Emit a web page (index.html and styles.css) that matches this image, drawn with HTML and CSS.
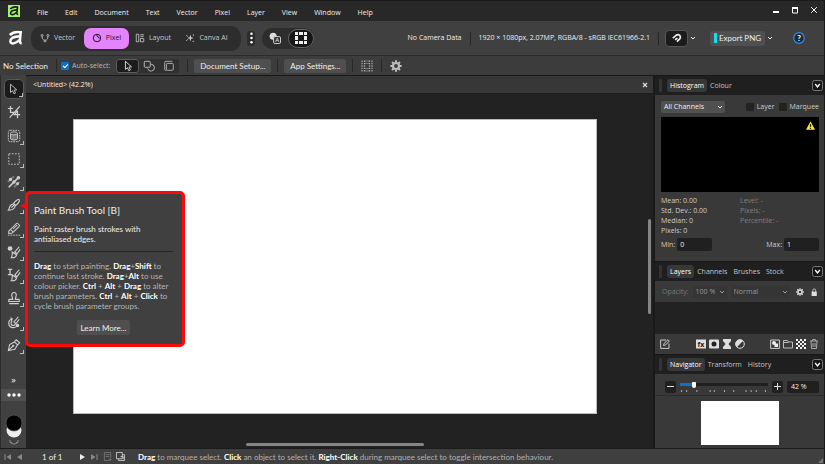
FILE: index.html
```html
<!DOCTYPE html>
<html lang="en">
<head>
<meta charset="utf-8">
<meta name="viewport" content="width=device-width, initial-scale=1">
<title>Untitled</title>
<link rel="stylesheet" href="styles.css">
</head>
<body>
<svg class="defs" aria-hidden="true">
  <symbol id="chevron" viewBox="0 0 6 6"><path d="M1 2l2 2 2-2" fill="none" stroke="currentColor"/></symbol>
  <symbol id="collapse" viewBox="0 0 11 11"><rect x=".5" y=".5" width="10" height="10" rx="2" fill="#161616" stroke="#777"/><path d="M3.200 4l2.300 3 2.300-3" fill="none" stroke="#fff" stroke-width="1.300"/></symbol>
  <symbol id="gear" viewBox="0 0 12 12"><circle cx="6" cy="6" r="3" fill="none" stroke="currentColor" stroke-width="2.200"/><path d="M6 .3v2M6 9.700v2M.3 6h2M9.700 6h2M2 2l1.400 1.400M8.600 8.600L10 10M10 2L8.600 3.400M3.400 8.600L2 10" stroke="currentColor" stroke-width="2"/></symbol>
  <symbol id="pointer" viewBox="0 0 14 14"><path d="M4 1.500v9.500l2.300-2 1.700 3.500 1.800-.9-1.700-3.300 3-.3z" fill="none" stroke="currentColor" stroke-linejoin="round"/></symbol>
  <symbol id="mark" viewBox="0 0 16 16"><path d="M2 4.800C4.500 2.200 9 1.200 13.500 1.800L12.600 11q0 2.500 2 2.400" fill="none" stroke="currentColor" stroke-width="2.800"/><path d="M12.500 6.200C7 6.500 2.500 8.500 2.500 11.500c0 3.500 6 3 9.500-1.500" fill="none" stroke="currentColor" stroke-width="2.600"/></symbol>
  <symbol id="brush" viewBox="0 0 16 16"><path d="M14 2c-1.800-1.200-5 2-6.500 4.300l2.200 2.200C12 7 15.200 3.500 14 2zM7.300 6.500L4.500 8C2.500 9.500 3 12 1.500 14c3 0 5.500-.5 6.800-2.500l1.400-2.800M5 11l3.500-3.500" fill="none" stroke="currentColor" stroke-width="1.300"/></symbol>
</svg>

<header class="menubar">
  <svg class="applogo" viewBox="0 0 12 12"><rect width="12" height="12" fill="#a4f074"/><use href="#mark" x="1" y="1" width="10" height="10"/></svg>
  <nav class="menus">
    <a href="#">File</a><a href="#">Edit</a><a href="#">Document</a><a href="#">Text</a><a href="#">Vector</a><a href="#">Pixel</a><a href="#">Layer</a><a href="#">View</a><a href="#">Window</a><a href="#">Help</a>
  </nav>
  <div class="winbtns">
    <button aria-label="Minimise"><svg viewBox="0 0 8 8"><path d="M1 6h6" stroke="#fff" stroke-width="2"/></svg></button>
    <button aria-label="Maximise"><svg viewBox="0 0 8 8"><path d="M1.500 2v5h5V2" fill="none" stroke="#fff"/><path d="M1 2h6" stroke="#fff" stroke-width="2"/></svg></button>
    <button aria-label="Close"><svg viewBox="0 0 8 8"><path d="M1.200 1.200l5.600 5.600M6.800 1.200L1.200 6.800" stroke="#fff"/></svg></button>
  </div>
</header>

<div class="toolbar">
  <svg class="biglogo" viewBox="0 0 16 16"><use href="#mark"/></svg>
  <div class="modes">
    <button class="mode"><svg viewBox="0 0 12 12"><g fill="none" stroke="currentColor"><circle cx="2.500" cy="3" r="1.200"/><circle cx="9.500" cy="3" r="1.200"/><circle cx="6" cy="9.500" r="1.200"/><path d="M2.500 4.500c0 2.500 1 3.500 2.500 4M9.500 4.500c0 2.500-1 3.500-2.500 4"/></g></svg>Vector</button>
    <button class="mode on"><svg viewBox="0 0 12 12"><circle cx="6" cy="6" r="4.500" fill="none" stroke="currentColor" stroke-width="1.200"/><path d="M6 1.500V4a2 2 0 0 1 2 2h2.500" fill="none" stroke="currentColor"/></svg>Pixel</button>
    <button class="mode layout"><svg viewBox="0 0 12 12"><path d="M1.500 1.500h3v9h-3zM6.500 2h4M6.500 4h4M6.500 6.500h4v4h-4z" fill="none" stroke="currentColor"/></svg>Layout</button>
    <button class="mode canva"><svg viewBox="0 0 12 12"><path d="M6.500 2l1 3 3 1-3 1-1 3-1-3-3-1 3-1z" fill="currentColor"/><path d="M1.500 2.500l2 2M1.500 9.500l2-2M10 1.500v2M9 10h2" stroke="currentColor"/></svg>Canva AI</button>
  </div>
  <button class="dots" aria-label="More"><svg viewBox="0 0 6 14"><g fill="#fff"><circle cx="3" cy="2" r="1.500"/><circle cx="3" cy="7" r="1.500"/><circle cx="3" cy="12" r="1.500"/></g></svg></button>
  <div class="views">
    <button aria-label="Assistant"><svg viewBox="0 0 13 13"><circle cx="4.500" cy="4.500" r="3.800" fill="#ddd"/><rect x="5" y="5" width="7.500" height="7.500" rx="1.500" fill="#2d2d2d" stroke="#ddd"/><text x="8.750" y="11" font-size="6" font-weight="700" text-anchor="middle" fill="#ddd">A</text></svg></button>
    <button class="on" aria-label="Pixel grid"><svg viewBox="0 0 12 12"><path d="M0 0h3v3H0zM4 0h4v3H4zM9 0h3v3H9zM0 4h3v4H0zM9 4h3v4H9zM0 9h3v3H0zM4 9h4v3H4zM9 9h3v3H9z" fill="#eee"/></svg></button>
  </div>
  <div class="info"><span>No Camera Data</span><i class="sep"></i><span>1920 × 1080px, 2.07MP, RGBA/8 - sRGB IEC61966-2.1</span><i class="sep"></i></div>
  <button class="snap" aria-label="Snapping"><svg viewBox="0 0 12 12"><path d="M2 5.500L5.500 2.500c3-2 6 1 4 4L6.500 9.500M4.500 7.500L7 5.500" fill="none" stroke="#eee" stroke-width="1.800"/></svg></button>
  <button class="drop" aria-label="Snapping options"><svg viewBox="0 0 6 6"><use href="#chevron"/></svg></button>
  <button class="export"><i></i>Export PNG</button>
  <button class="drop" aria-label="Export options"><svg viewBox="0 0 6 6"><use href="#chevron"/></svg></button>
  <button class="help" aria-label="Help"><svg viewBox="0 0 12 12"><circle cx="6" cy="6" r="5.300" fill="#202a36" stroke="#338be0" stroke-width="1.200"/><text x="6" y="9" font-size="8" font-weight="700" text-anchor="middle" fill="#fff">?</text></svg></button>
</div>

<div class="context">
  <span class="nosel">No Selection</span><i class="sep"></i>
  <label class="auto"><input type="checkbox" class="check" checked>Auto-select:</label>
  <div class="segments">
    <button class="on" aria-label="Objects"><svg viewBox="0 0 14 14"><use href="#pointer"/></svg></button>
    <button aria-label="Group"><svg viewBox="0 0 14 14"><g fill="none" stroke="#ccc"><rect x="1.500" y="1.500" width="7" height="7" rx="1"/><path d="M9.500 5a4 4 0 1 1-4 5"/></g></svg></button>
    <button aria-label="Layers"><svg viewBox="0 0 14 14"><g fill="none" stroke="#bbb"><rect x="4" y="4" width="8" height="8" rx="1"/><path d="M2 11V3q0-1.500 1.500-1.500H11M2 11q0 1.500 2 1"/></g></svg></button>
  </div>
  <i class="sep"></i>
  <button class="btn">Document Setup...</button><i class="sep"></i>
  <button class="btn">App Settings...</button><i class="sep"></i>
  <button class="icon" aria-label="Grid"><svg viewBox="0 0 12 12"><path d="M1 .5v11M3.500 .5v11M8.500 .5v11M11 .5v11" stroke="#aaa" stroke-width="1.200" stroke-dasharray="1.400 1"/><path d="M4.500 1h3M4.500 3.500h3M4.500 8.500h3M4.500 11h3" stroke="#aaa" stroke-dasharray="1 1"/></svg></button><i class="sep"></i>
  <button class="icon" aria-label="Preferences"><svg viewBox="0 0 12 12"><use href="#gear"/></svg></button>
</div>

<main class="work">
  <aside class="tools">
    <div class="toollist">
      <button class="tool on" aria-label="Move"><svg viewBox="0 0 16 16"><use href="#pointer" x="-1" y="1" width="16" height="14"/></svg></button>
      <button class="tool plain" aria-label="Crop"><svg viewBox="0 0 16 16"><path d="M4 1v7.500h4M1 4h6M14.500 1.500L3 14.500M7.500 11H15M12 6.500V15M12 6.500L8.500 11" fill="none" stroke="currentColor" stroke-width="1.400"/></svg></button>
      <button class="tool" aria-label="Object selection"><svg viewBox="0 0 16 16"><rect x="1.500" y="1.500" width="13" height="13" rx="2" fill="none" stroke="currentColor" stroke-dasharray="2 1"/><path d="M4 5v6c0 2 8 2 8 0V5" fill="#777" stroke="currentColor"/><ellipse cx="8" cy="5" rx="4" ry="1.700" fill="#444" stroke="currentColor"/></svg></button>
      <button class="tool" aria-label="Marquee"><svg viewBox="0 0 16 16"><rect x="2" y="2" width="12" height="12" fill="none" stroke="currentColor" stroke-dasharray="2 1.500"/></svg></button>
      <button class="tool" aria-label="Gradient"><svg viewBox="0 0 16 16"><path d="M1 8L8 1.500M2 14L14 2M8 14l6-6" stroke="#777" stroke-width="2.500"/><path d="M2 14L14 2" stroke="currentColor" stroke-width="1.500"/><g fill="currentColor"><circle cx="4" cy="5" r="1.800"/><circle cx="8" cy="8" r="2"/><circle cx="13" cy="3" r="2"/><circle cx="12" cy="10" r="1.600"/></g></svg></button>
      <button class="tool" aria-label="Paint Brush Tool"><svg viewBox="0 0 16 16"><use href="#brush"/></svg></button>
      <button class="tool" aria-label="Erase"><svg viewBox="0 0 16 16"><path d="M2 10.500L10.500 2q1-1 2 0l1.300 1.300q1 1 0 2L6 12.500l-4 .500zM4 8.500l3.500 3.500M7 8l4.500-4.500" fill="none" stroke="currentColor" stroke-width="1.200"/><path d="M1 15h14" stroke="currentColor" stroke-dasharray="2 1"/></svg></button>
      <button class="tool" aria-label="Dodge"><svg viewBox="0 0 16 16"><circle cx="3.500" cy="4" r="2.700" fill="currentColor"/><path d="M14 2L8.500 8.500M6 8l5 3.500q-1 3.500-6 3 1-1 1-6.500zM9 8l2.500 2L15 5" fill="none" stroke="currentColor" stroke-width="1.300"/></svg></button>
      <button class="tool" aria-label="Clone"><svg viewBox="0 0 16 16"><path d="M1 1.500h5M3.500 1.500v6M1 7.500h5" stroke="currentColor" stroke-width="1.500"/><path d="M14 2L8.500 8.500M6 8l5 3.500q-1 3.500-6 3 1-1 1-6.500zM9 8l2.500 2L15 5" fill="none" stroke="currentColor" stroke-width="1.300"/></svg></button>
      <button class="tool" aria-label="Stamp"><svg viewBox="0 0 16 16"><path d="M6.500 9.500L5.500 5a2.600 2.600 0 1 1 5 0l-1 4.500h3.500q1 0 1 1V12H2v-1.500q0-1 1-1zM2.500 14.500h11" fill="none" stroke="currentColor" stroke-width="1.300"/></svg></button>
      <button class="tool" aria-label="Retouch"><svg viewBox="0 0 16 16"><path d="M6 4.500A5 5 0 1 0 12 10M6 7a2.600 2.600 0 1 0 3.500 3.500M13 2L8 8l2 2 4-5M4 3l2 1.500L5 7" fill="none" stroke="currentColor" stroke-width="1.300"/><circle cx="12" cy="12" r="2" fill="currentColor"/></svg></button>
      <button class="tool" aria-label="Pen"><svg viewBox="0 0 16 16"><path d="M1.500 14.500L3 7.500l5.500-3 3.500 3.300-3 5.200zM1.500 14.500L7 9M8.500 4.500l2-2.500L14.500 5.500 12 7.800" fill="none" stroke="currentColor" stroke-width="1.200"/><circle cx="7.200" cy="8.800" r="1.200" fill="currentColor"/></svg></button>
    </div>
    <button class="more" aria-label="More tools">»</button>
    <button class="ellipsis" aria-label="Customise"><svg viewBox="0 0 14 4"><g fill="#fff"><circle cx="2" cy="2" r="1.700"/><circle cx="7" cy="2" r="1.700"/><circle cx="12" cy="2" r="1.700"/></g></svg></button>
    <button class="colours" aria-label="Colours"><svg viewBox="0 0 18 34"><circle cx="9" cy="16" r="7.500" fill="#eee"/><circle cx="9" cy="9" r="8" fill="#000" stroke="#555" stroke-width=".8"/><path d="M5 28q4 4 8 0M5 26v2.500h2M13 26v2.500h-2" fill="none" stroke="#888"/></svg></button>
  </aside>

  <section class="document">
    <div class="tab"><span>&lt;Untitled&gt; (42.2%)</span><button aria-label="Close document"><svg viewBox="0 0 8 8"><path d="M2 2l4 4M6 2L2 6" stroke="#ddd" stroke-width="1.200"/></svg></button></div>
    <div class="stage"><div class="page"></div><i class="vscroll"></i><i class="hscroll"></i></div>
  </section>

  <aside class="panels">
    <div class="tabs"><i class="grip"></i><button class="on">Histogram</button><button>Colour</button><button class="fold" aria-label="Collapse"><svg viewBox="0 0 11 11"><use href="#collapse"/></svg></button></div>
    <div class="histogram">
      <div class="channels">
        <span class="select wide"><select aria-label="Channels"><option>All Channels</option></select><svg viewBox="0 0 6 6"><use href="#chevron"/></svg></span>
        <label><input type="checkbox" class="check">Layer</label><label><input type="checkbox" class="check">Marquee</label>
      </div>
      <div class="graph"><svg viewBox="0 0 9 9"><path d="M4.500 .3L9 8.700H0z" fill="#ffec00"/><path d="M4.500 3v3M4.500 6.800v1.200" stroke="#222" stroke-width="1.200"/></svg></div>
      <div class="stats"><div>Mean: 0.00<br>Std. Dev.: 0.00<br>Median: 0<br>Pixels: 0</div><div class="dim">Level: -<br>Pixels: -<br>Percentile: -</div></div>
      <div class="range"><label>Min:<input type="text" value="0"></label><label>Max:<input type="text" value="1"></label></div>
    </div>
    <div class="tabs"><i class="grip"></i><button class="on">Layers</button><button>Channels</button><button>Brushes</button><button>Stock</button><button class="fold" aria-label="Collapse"><svg viewBox="0 0 11 11"><use href="#collapse"/></svg></button></div>
    <div class="opacity">
      <label for="op">Opacity:</label>
      <span class="select op"><select id="op"><option>100 %</option></select><svg viewBox="0 0 6 6"><use href="#chevron"/></svg></span>
      <span class="select blend"><select aria-label="Blend mode"><option>Normal</option></select><svg viewBox="0 0 6 6"><use href="#chevron"/></svg></span>
      <button aria-label="Blend options"><svg viewBox="0 0 12 12"><use href="#gear"/></svg></button>
      <button aria-label="Lock"><svg viewBox="0 0 10 10"><path d="M2 4.500h6.500V10H2z" fill="#ddd"/><path d="M3.500 5V3a1.800 1.800 0 0 1 3.600 0v2" fill="none" stroke="#ddd"/></svg></button>
    </div>
    <div class="layers"></div>
    <div class="layericons">
      <button aria-label="Edit"><svg viewBox="0 0 10 10"><path d="M6 1H.6v8.400H9V4.500M3.500 6.500l.5-2L8 .7l1.300 1.300L5.500 6z" fill="none" stroke="#ccc"/></svg></button>
      <button class="gap" aria-label="Effects"><svg viewBox="0 0 10 10"><rect y=".5" width="10" height="9" fill="#ddd"/><text x="5" y="7.800" font-size="7" font-weight="700" text-anchor="middle" fill="#222">fx</text></svg></button>
      <button aria-label="Mask"><svg viewBox="0 0 10 10"><rect y=".5" width="10" height="9" rx="1" fill="#ddd"/><circle cx="5" cy="5" r="2.500" fill="#222"/></svg></button>
      <button aria-label="Live filter"><svg viewBox="0 0 10 10"><path d="M1 0h8v2L6.500 5 9 8v2H1V8l2.500-3L1 2z" fill="#ddd"/></svg></button>
      <button aria-label="Adjustment"><svg viewBox="0 0 10 10"><circle cx="5" cy="5" r="4.300" fill="none" stroke="#ddd"/><path d="M8.200 1.800A4.500 4.500 0 0 0 1.800 8.200z" fill="#ddd"/></svg></button>
      <button class="gap" aria-label="Group"><svg viewBox="0 0 10 10"><path d="M.6 1h8.800v8.400H.6z" fill="none" stroke="#ccc"/><circle cx="4" cy="4" r="2" fill="#eee"/><path d="M4.500 4.500H8V8H4.500z" fill="#eee"/></svg></button>
      <button aria-label="Folder"><svg viewBox="0 0 10 10"><path d="M.5 9V1.500h4l1 1.500h4v6zM.5 3.500h5" fill="none" stroke="#bbb"/></svg></button>
      <button aria-label="Pixel layer"><svg viewBox="0 0 10 10"><path d="M0 1h10M0 5h10M0 9h10" stroke="#eee" stroke-width="2" stroke-dasharray="2 2"/><path d="M2 3h8M2 7h8" stroke="#eee" stroke-width="2" stroke-dasharray="2 2"/></svg></button>
      <button aria-label="Delete"><svg viewBox="0 0 10 10"><path d="M1 2h8M3.500 2V.6h3V2M2 2l.5 7.500h5L8 2M4 4v4M6 4v4" fill="none" stroke="#aaa"/></svg></button>
    </div>
    <div class="tabs"><i class="grip"></i><button class="on">Navigator</button><button>Transform</button><button>History</button><button class="fold" aria-label="Collapse"><svg viewBox="0 0 11 11"><use href="#collapse"/></svg></button></div>
    <div class="zoom">
      <button aria-label="Zoom out"><svg viewBox="0 0 11 11"><path d="M2 5.500h7" stroke="#ddd"/></svg></button>
      <div class="slide"><input type="range" aria-label="Zoom" min="0" max="100" value="14"><svg viewBox="0 0 86 2" preserveAspectRatio="none"><path d="M1 1h1M6 1h1M16 1h1M29 1h1M33 1h1M43 1h1M52 1h1M64 1h1M69 1h1M74 1h1M83 1h1" stroke="#aaa" stroke-width="2"/></svg></div>
      <button aria-label="Zoom in"><svg viewBox="0 0 11 11"><path d="M2 5.500h7M5.500 2v7" stroke="#ddd"/></svg></button>
      <input type="text" aria-label="Zoom level" value="42 %">
    </div>
    <div class="preview"><div></div></div>
  </aside>

  <div class="tip" role="tooltip">
    <h2>Paint Brush Tool [B]</h2>
    <p class="lead">Paint raster brush strokes with<br>antialiased edges.</p>
    <hr>
    <p><b>Drag</b> to start painting. <b>Drag</b>+<b>Shift</b> to<br>continue last stroke. <b>Drag</b>+<b>Alt</b> to use<br>colour picker. <b>Ctrl</b> + <b>Alt</b> + <b>Drag</b> to alter<br>brush parameters. <b>Ctrl</b> + <b>Alt</b> + <b>Click</b> to<br>cycle brush parameter groups.</p>
    <button class="btn">Learn More...</button>
  </div>
</main>

<footer class="status">
  <button aria-label="First"><svg viewBox="0 0 8 8"><path d="M1 1v6" stroke="#888"/><path d="M7 1v6L2.500 4z" fill="#888"/></svg></button>
  <button aria-label="Previous"><svg viewBox="0 0 8 8"><path d="M6 1v6L1 4z" fill="#888"/></svg></button>
  <span class="count">1 of 1</span>
  <button aria-label="Next"><svg viewBox="0 0 8 8"><path d="M1 1v6l5-3z" fill="#eee"/></svg></button>
  <button aria-label="Last"><svg viewBox="0 0 8 8"><path d="M0 1v6l4.500-3z" fill="#888"/><path d="M6 1v6" stroke="#888"/></svg></button>
  <button class="pg" aria-label="Page"><svg viewBox="0 0 10 10"><path d="M1.500 .5h7v6M1.500 .5v9h5M3 3h4M3 5h4M8 7v3M6.500 8.500h3" fill="none" stroke="#777"/></svg></button>
  <button class="pg" aria-label="Duplicate page"><svg viewBox="0 0 10 10"><path d="M.5 .5h6.500v7H.5zM3 7.500v2h6.500v-6.500H7M5 5h3v3" fill="none" stroke="#ccc"/></svg></button>
  <p><b>Drag</b> to marquee select. <b>Click</b> an object to select it. <b>Right-Click</b> during marquee select to toggle intersection behaviour.</p>
  <svg class="resize" viewBox="0 0 6 6"><path d="M6 0v6H0z" fill="#777"/></svg>
</footer>
</body>
</html>
```
FILE: styles.css
```css
* { box-sizing: border-box; }
body {
  margin: 0;
  min-height: 100vh;
  display: flex;
  flex-direction: column;
  background: #222;
  color: #eee;
  font: 8px/10px Lato, "Open Sans", sans-serif;
  border-right: 1px solid #191919;
}
.defs { display: none; }
button, input, select {
  font: inherit;
  color: inherit;
  background: none;
  border: 0;
  padding: 0;
  margin: 0;
}
button { display: flex; align-items: center; justify-content: center; white-space: nowrap; }
svg { display: block; flex: none; }
a { color: inherit; text-decoration: none; }
p, h2 { margin: 0; }
b { color: #fff; font-weight: 700; }
.sep { width: 1px; height: 13px; background: #282828; flex: none; }
.menus, .modes, .info, .auto, .tab, .panels { font: 7px/10px "Open Sans", sans-serif; }

/* Menu bar */
.menubar {
  display: flex;
  align-items: center;
  height: 21px;
  padding: 0 6px 0 8px;
  background: #282828;
  border-top: 1px solid #1a1a1a;
}
.applogo { width: 12px; height: 12px; color: #17220f; }
.menus { display: flex; gap: 17px; padding: 3px 0 0 17px; font-weight: 500; }
.winbtns { display: flex; gap: 11px; margin-left: auto; padding-bottom: 3px; }
.winbtns svg { width: 8px; height: 8px; }

/* Main toolbar */
.toolbar {
  display: flex;
  align-items: center;
  height: 34px;
  padding: 0 19px 0 8px;
  background: #404040;
}
.biglogo { width: 15px; height: 16px; color: #fff; }
.modes {
  display: flex;
  align-items: center;
  height: 25px;
  width: 210px;
  margin-left: 8px;
  border-radius: 10px;
  background: #2d2d2d;
}
.mode { height: 21px; width: 45px; gap: 4px; color: #c8c8c8; border-radius: 7px; }
.mode:first-child { width: 53px; }
.mode svg { width: 10px; height: 10px; }
.mode.on { background: #e384fa; color: #2b1130; }
.mode.layout { width: 48px; }
.mode.canva { width: 59px; }
.dots { width: 8px; height: 15px; margin-left: 6px; border-radius: 3px; background: #2b2b2b; }
.dots svg { width: 5px; height: 12px; }
.views {
  display: flex;
  align-items: center;
  margin-left: 7px;
  width: 52px;
  height: 21px;
  border-radius: 10px;
  background: #2d2d2d;
}
.views button { width: 26px; height: 19px; border-radius: 10px; }
.views .on { background: #171717; border: 1px solid #666; }
.views svg { width: 12px; height: 12px; }
.info { display: flex; align-items: center; gap: 8px; margin-left: auto; white-space: nowrap; font-weight: 500; }
.snap { width: 23px; height: 17px; margin-left: 6px; background: #1b1b1b; border: 1px solid #565656; border-radius: 4px; }
.snap svg { width: 11px; height: 11px; }
.drop { width: 10px; height: 16px; }
.drop svg { width: 6px; height: 6px; }
.export { height: 15px; width: 55px; gap: 2px; margin-left: 12px; border-radius: 3px; background: #505050; }
.export i { width: 3px; height: 10px; background: #13dcec; }
.help { margin-left: 18px; }
.help svg { width: 12px; height: 12px; }

/* Context bar */
.context {
  display: flex;
  align-items: center;
  gap: 6px;
  height: 20px;
  padding: 0 3px;
  background: #3c3c3c;
  border-top: 1px solid #2c2c2c;
  white-space: nowrap;
}
.nosel { width: 47px; }
.auto { display: flex; align-items: center; gap: 3px; margin-left: -2px; color: #bbb; }
.check { appearance: none; width: 8px; height: 8px; border-radius: 1px; background: #222; }
.check:checked { background: #0f70c8; }
.check:checked::after { content: ""; display: block; width: 4px; height: 2px; margin: 2px; border: solid #fff; border-width: 0 0 1px 1px; transform: rotate(-45deg); }
.segments { display: flex; width: 63px; border-radius: 3px; background: #303030; margin-right: 2px; }
.segments button { flex: 1; height: 14px; border-radius: 3px; }
.segments .on { background: #1c1c1c; border: 1px solid #5c5c5c; }
.segments svg { width: 12px; height: 12px; }
.btn { height: 14px; padding: 0 6px; border-radius: 2px; background: #4f4f4f; }
.icon { margin: 0 2px; color: #bbb; }
.icon svg { width: 12px; height: 12px; }

/* Workspace */
.work {
  position: relative;
  flex: 1;
  display: grid;
  grid-template-columns: 26px minmax(0, 1fr) 170px;
}
.tools { display: flex; flex-direction: column; align-items: center; background: #414141; border-left: 1px solid #2c2c2c; }
.toollist { flex: 1; display: flex; flex-direction: column; justify-content: space-between; padding-top: 4px; }
.tool { position: relative; width: 20px; height: 20px; color: #d0d0d0; border-radius: 5px; }
.tool svg { width: 14px; height: 14px; }
.tool.on { background: #1b1b1b; border: 1px solid #5a5a5a; }
.tool::after { content: ""; position: absolute; right: 0; bottom: 1px; width: 3px; height: 3px; border: solid #bbb; border-width: 0 1px 1px 0; }
.tool.plain::after { display: none; }
.more { margin-top: 20px; height: 10px; font: 9px/10px "Open Sans", sans-serif; }
.ellipsis { width: 100%; height: 12px; margin-top: 4px; background: #505050; }
.ellipsis svg { width: 14px; height: 4px; }
.colours { margin-top: 13px; }
.colours svg { width: 18px; height: 34px; }

.document { display: flex; flex-direction: column; border: solid #191919; border-width: 1px 1px 0 0; }
.tab { display: flex; align-items: center; justify-content: space-between; height: 18px; padding: 0 4px 0 7px; background: #373737; border-bottom: 1px solid #1b1b1b; }
.tab svg { width: 8px; height: 8px; }
.stage {
  flex: 1;
  display: grid;
  grid-template: 25px minmax(0, 1fr) 34px / 47px minmax(0, 1fr) 56px;
  background: #222;
}
.page { grid-area: 2 / 2; background: #fff; border: 1px solid #bbb; }
.vscroll { grid-area: 1 / 3 / 4 / 4; justify-self: end; width: 3px; height: 95px; margin: 125px 2px 0 0; border-radius: 2px; background: #858585; }
.hscroll { grid-area: 3 / 2; align-self: end; justify-self: center; width: 178px; height: 3px; margin-bottom: 2px; border-radius: 2px; background: #858585; }

/* Panels */
.panels { display: flex; flex-direction: column; background: #393939; border-left: 1px solid #1a1a1a; }
.tabs { display: flex; align-items: center; height: 20px; padding: 0 1px 0 4px; background: #1f1f1f; border-top: 1px solid #171717; color: #c5c5c5; }
.tabs button { height: 13px; padding: 0 3px; border-radius: 3px; }
.tabs .on { background: #383838; color: #fff; }
.tabs .fold { margin-left: auto; padding: 0; }
.fold svg { width: 11px; height: 11px; }
.grip { width: 3px; height: 13px; margin-right: 5px; border-radius: 1px; background: #333; }
.histogram { padding: 6px 5px 10px 6px; }
.channels { display: flex; align-items: center; gap: 4px; color: #ccc; }
.channels label { display: flex; align-items: center; gap: 3px; }
.select { display: flex; align-items: center; height: 12px; padding-right: 2px; border-radius: 2px; background: #505050; }
.select select { flex: 1; min-width: 0; height: 12px; padding-left: 3px; appearance: none; }
.select svg { width: 6px; height: 6px; }
.select.wide { width: 64px; margin-right: auto; color: #eee; }
.graph { height: 75px; margin-top: 4px; padding: 4px; background: #000; }
.graph svg { width: 9px; height: 9px; margin-left: auto; }
.stats { display: grid; grid-template-columns: 1fr 1fr; padding-top: 4px; color: #ccc; }
.dim { color: #808080; }
.range { display: flex; justify-content: space-between; padding-top: 2px; color: #ccc; }
.range label { display: flex; align-items: center; gap: 2px; }
.range input { width: 35px; height: 13px; padding: 0 3px; border-radius: 2px; background: #202020; color: #eee; }
.opacity { display: flex; align-items: center; gap: 4px; height: 21px; padding: 0 6px 0 7px; color: #777; }
.opacity .select { background: #353535; color: #999; }
.select.op { width: 34px; }
.select.blend { flex: 1; }
.opacity button { color: #ddd; margin-left: 2px; }
.opacity button svg { width: 8px; height: 8px; }
.layers { flex: 1; min-height: 30px; background: #222; }
.layericons { display: flex; align-items: center; gap: 3px; height: 20px; padding: 0 5px 0 5px; }
.layericons svg { width: 10px; height: 10px; }
.layericons .gap { margin-left: auto; }
.zoom { display: flex; align-items: center; gap: 4px; height: 22px; padding: 4px 5px 0 10px; border-bottom: 1px solid #2c2c2c; }
.zoom button, .zoom > input { height: 12px; border-radius: 2px; background: #202020; }
.zoom button svg { width: 11px; height: 11px; }
.zoom > input { width: 32px; padding: 0 4px; }
.slide { flex: 1; min-width: 0; }
.slide input { display: block; width: 100%; height: 7px; appearance: none; }
.slide input::-webkit-slider-runnable-track { height: 3px; background: linear-gradient(90deg, #0f70c8 15%, #202020 15%); }
.slide input::-webkit-slider-thumb { appearance: none; width: 4px; height: 6px; margin-top: -1px; border-radius: 1px 1px 2px 2px; background: #fff; }
.slide svg { width: 100%; height: 2px; margin-top: 2px; }
.preview { display: flex; justify-content: center; padding: 5px 3px 3px; }
.preview div { width: 78px; height: 44px; background: #fff; }

/* Tooltip over the canvas */
.tip {
  position: absolute;
  left: 25px;
  top: 116px;
  width: 160px;
  padding: 10px 9px 9px 6px;
  border: 3px solid #ff0808;
  border-radius: 5px;
  background: #404040;
  color: #b5b5b5;
  white-space: nowrap;
}
.tip::before { content: ""; position: absolute; left: -8px; top: 8px; border: 4px solid transparent; border-width: 4px 8px 4px 0; border-right-color: #ff0808; }
.tip h2 { font-size: 10px; line-height: 12px; font-weight: 400; color: #eee; }
.tip .lead { margin-top: 8px; color: #eee; }
.tip hr { margin: 7px 0 9px; border: 0; border-top: 1px solid #252525; }
.tip .btn { height: 15px; margin: 9px auto 0; padding: 0 4px; color: #eee; }

/* Status bar */
.status { display: flex; align-items: center; gap: 4px; height: 16px; padding: 0 1px 0 4px; background: #3f3f3f; border-top: 1px solid #1b1b1b; color: #b0b0b0; white-space: nowrap; }
.status svg { width: 8px; height: 8px; }
.count { width: 18px; margin: 0 15px 0 14px; color: #eee; }
.status .pg svg { width: 9px; height: 9px; }
.status p { margin-left: 9px; }
.status .resize { width: 5px; height: 5px; margin: auto 0 1px auto; }
```
